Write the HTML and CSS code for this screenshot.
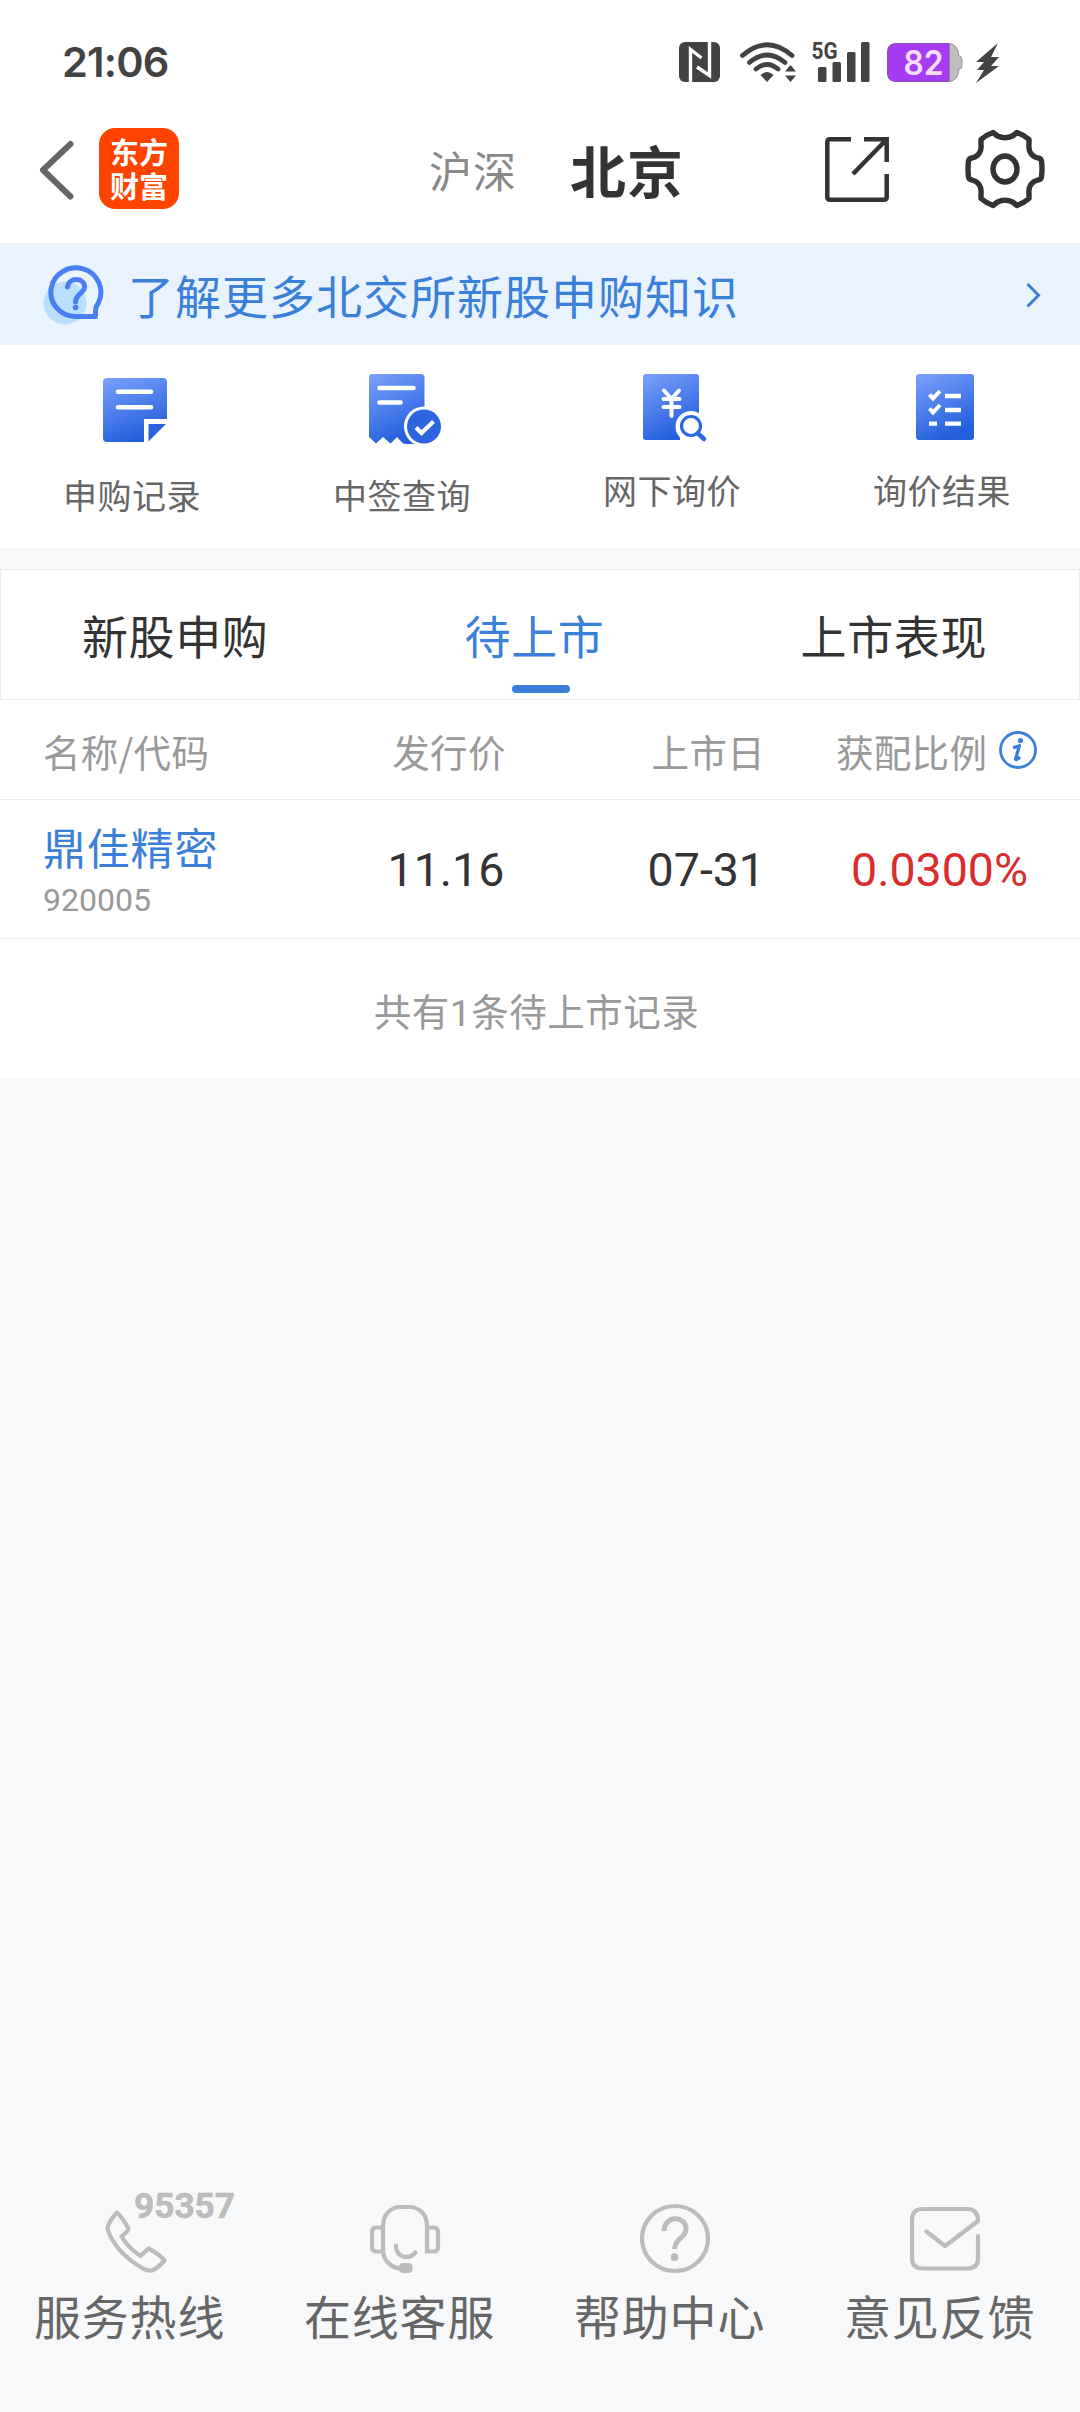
FILE: index.html
```html
<!DOCTYPE html>
<html lang="zh-CN">
<head>
<meta charset="utf-8">
<title>新股申购 - 北京</title>
<link rel="stylesheet" href="styles.css">
</head>
<body>
<div class="screen">
  <div class="status">
    <span class="clock">21:06</span>
    <svg class="status-icons" width="330" height="50" viewBox="675 38 330 50">
      <g fill="#424242">
        <rect x="679" y="42" width="41" height="40" rx="6"/>
        <path d="M690.5 82V49.5L701.5 58" fill="none" stroke="#fff" stroke-width="3.4"/>
        <path d="M709.5 42V75.500L697 67" fill="none" stroke="#fff" stroke-width="3.4"/>
        <g fill="none" stroke="#424242" stroke-width="4.800" stroke-linecap="round">
          <path d="M742.500 55.500Q767 34 792 55.500"/>
          <path d="M749.500 62.500Q767 47.500 785 62.500"/>
          <path d="M756 69Q767 60 778 69"/>
        </g>
        <path d="M760.500 75Q767 69 773.500 75L767 82Z"/>
        <path d="M785 71.500L790.500 65L796 71.500ZM785 75.500L790.500 82L796 75.500Z"/>
        <rect x="818" y="67" width="8.500" height="15" rx="1.500"/>
        <rect x="832.500" y="62" width="8.500" height="20" rx="1.500"/>
        <rect x="847" y="52" width="8.500" height="30" rx="1.500"/>
        <rect x="861" y="42" width="8.500" height="40" rx="1.500"/>
        <text class="net" x="811.500" y="58.500" textLength="26" lengthAdjust="spacingAndGlyphs">5G</text>
      </g>
      <path d="M949 43.500Q958 44 959 56Q962 56 962 60V65Q962 69 959 69.500Q958 81 949 81.500Z" fill="#bdbdbd" stroke="#999"/>
      <path d="M949 43.500V81.500H896Q887.500 81.500 887.500 73V52Q887.500 43.500 896 43.500Z" fill="#a63cf2" stroke="#8d4ab8"/>
      <text class="pct" x="903.500" y="74.500" textLength="40" lengthAdjust="spacingAndGlyphs">82</text>
      <path d="M998 43L976 62H984L977 70H984L976 83L999 66H991L999 57H991Z" fill="#424242"/>
    </svg>
  </div>

  <header class="nav">
    <svg class="back" width="36" height="60" viewBox="39 140 36 60"><path d="M70.500 144L43 170L70.500 196.500" fill="none" stroke="#666" stroke-width="6" stroke-linecap="round" stroke-linejoin="round"/></svg>
    <div class="logo"><span>东方</span><span>财富</span></div>
    <span class="market">沪深</span>
    <span class="market market-on">北京</span>
    <svg class="share" width="66" height="67" viewBox="824 136 66 67"><path d="M851 139.300H830Q827.300 139.300 827.300 142V197Q827.300 199.700 830 199.700H884Q886.700 199.700 886.700 197V174M886.700 162V139.300H864M853 174L886 140" fill="none" stroke="#333" stroke-width="4.500"/></svg>
    <svg class="gear" width="84" height="84" viewBox="-42 -42 84 84">
      <g fill="none" stroke="#333" stroke-width="5.400" stroke-linejoin="round">
        <path d="M7.500 -33L12 -36.500Q18 -34.500 24 -29.500V-25C23 -17 27 -12.500 33 -11Q36 -10.500 36.500 -8Q37.500 0 36.500 8Q36 10.500 33 11C27 12.500 23 17 24 25V29.500Q18 34.500 12 36.500L7.500 33Q0 29.500 -7.500 33L-12 36.500Q-18 34.500 -24 29.500V25C-23 17 -27 12.500 -33 11Q-36 10.500 -36.500 8Q-37.500 0 -36.500 -8Q-36 -10.500 -33 -11C-27 -12.500 -23 -17 -24 -25V-29.500Q-18 -34.500 -12 -36.500L-7.500 -33Q0 -29.500 7.500 -33Z"/>
        <ellipse rx="12" ry="13"/>
      </g>
    </svg>
  </header>

  <div class="banner">
    <svg class="ask" width="62" height="62" viewBox="42 264 62 62">
      <circle cx="65" cy="303" r="21.500" fill="#bbdffe"/>
      <path d="M97.500 316.500H75.500A25 24.300 0 1 1 98.500 302.500C96 306 95.500 308 95.500 311V316.500Z" fill="none" stroke="#4a7ef5" stroke-width="5"/>
      <path d="M67.500 287C68.500 277 84.500 277 84.500 287C84.500 293 75.500 294 75.500 302" fill="none" stroke="#4a7ef5" stroke-width="5" stroke-linecap="round"/>
      <circle cx="75.500" cy="307.500" r="2.800" fill="#4a7ef5"/>
    </svg>
    <span class="banner-text">了解更多北交所新股申购知识</span>
    <svg class="more" width="18" height="28" viewBox="1024 282 18 28"><path d="M1027.500 285L1038.500 296.300L1027.500 307.500" fill="none" stroke="#3a80d9" stroke-width="3"/></svg>
  </div>

  <nav class="tools">
    <a class="tool">
      <svg width="80" height="76" viewBox="96 370 80 76">
        <defs><linearGradient id="blue" x1="0" y1="0" x2=".4" y2="1"><stop offset="0" stop-color="#7ba2fd"/><stop offset="1" stop-color="#2560dc"/></linearGradient></defs>
        <path d="M107 378H163Q167 378 167 382V419H144V442H107Q103 442 103 438V382Q103 378 107 378Z" fill="url(#blue)"/>
        <path d="M148.500 424H166L148.500 441.500Z" fill="#2b63dc"/>
        <path d="M118 391.700H151M118 407.300H151" stroke="#fff" stroke-width="4.600" stroke-linecap="round"/>
      </svg>
      <span>申购记录</span>
    </a>
    <a class="tool">
      <svg width="80" height="76" viewBox="366 370 80 76">
        <path d="M372 374H421Q424.500 374 424.500 377.500V444H407L403 443.500L397 437L390.500 443.500L383 437L376 443.500L369 437V377Q369 374 372 374Z" fill="url(#blue)"/>
        <path d="M379.500 388H413.500M379.500 402.500H400.500" stroke="#fff" stroke-width="4.600" stroke-linecap="round"/>
        <circle cx="424" cy="426.500" r="20" fill="#fff"/>
        <circle cx="424" cy="426.500" r="17" fill="#2c65de"/>
        <path d="M416 427.500L421.500 433L433.500 421.500" fill="none" stroke="#fff" stroke-width="4.200"/>
      </svg>
      <span>中签查询</span>
    </a>
    <a class="tool tool-high">
      <svg width="80" height="76" viewBox="636 370 80 76">
        <rect x="643" y="374" width="56" height="66" rx="3" fill="url(#blue)"/>
        <path d="M664 390.500L671.500 399L679 390.500M671.500 399V416M663.500 399H679.500M663.500 407H679.500" fill="none" stroke="#fff" stroke-width="4" stroke-linecap="round"/>
        <circle cx="691" cy="426.500" r="15.500" fill="#fff"/>
        <path d="M680 437L697 432L704 440.500V445H680Z" fill="#fff"/>
        <circle cx="691" cy="426" r="9.500" fill="#fff" stroke="#2f68dc" stroke-width="3.200"/>
        <path d="M698 433.500L704 439" stroke="#2f68dc" stroke-width="4.500" stroke-linecap="round"/>
      </svg>
      <span>网下询价</span>
    </a>
    <a class="tool tool-high">
      <svg width="80" height="76" viewBox="906 370 80 76">
        <rect x="916" y="374" width="58" height="66" rx="3" fill="url(#blue)"/>
        <path d="M945 396H961M945 410H961M945 423.700H961M929 423.700H937" stroke="#fff" stroke-width="4.300"/>
        <path d="M929.500 394.500L933 398.500L940 391M929.500 408.500L933 412.500L940 405" fill="none" stroke="#fff" stroke-width="4"/>
      </svg>
      <span>询价结果</span>
    </a>
  </nav>

  <div class="tabs">
    <span class="tab">新股申购</span>
    <span class="tab tab-on">待上市</span>
    <span class="tab">上市表现</span>
  </div>

  <section class="table">
    <div class="row head">
      <span class="c1">名称/代码</span>
      <span class="c2">发行价</span>
      <span class="c3">上市日</span>
      <span class="c4">获配比例<svg class="info" width="40" height="40" viewBox="0 0 40 40"><circle cx="20" cy="20" r="17.500" fill="none" stroke="#3a80d9" stroke-width="2.800"/><circle cx="22.500" cy="10.500" r="2.600" fill="#3a80d9"/><path d="M15 17.500Q19 17 21.500 15.500L17.500 29Q17.500 31 22 27" fill="none" stroke="#3a80d9" stroke-width="3.200" stroke-linejoin="round"/></svg></span>
    </div>
    <div class="row stock">
      <div class="c1"><div class="name">鼎佳精密</div><div class="code">920005</div></div>
      <span class="c2">11.16</span>
      <span class="c3">07-31</span>
      <span class="c4 red">0.0300%</span>
    </div>
    <div class="total">共有<i>1</i>条待上市记录</div>
  </section>

  <footer class="service">
    <a class="help">
      <svg width="140" height="98" viewBox="100 2180 140 98">
        <path d="M117 2212.500Q122 2217 128.500 2228.500Q128.500 2231 121.500 2236.500Q128 2247.500 140.500 2256L148.500 2248.500Q158 2253 164.500 2260.500Q158 2268 152 2270.500Q148 2271 143 2268.500C126 2259 112 2244 107.500 2229Q107.500 2223 117 2212.500Z" fill="none" stroke="#bcbcbc" stroke-width="4.200" stroke-linejoin="round"/>
        <text class="hot" x="134" y="2217.500" textLength="101" lengthAdjust="spacingAndGlyphs">95357</text>
      </svg>
      <span>服务热线</span>
    </a>
    <a class="help">
      <svg width="140" height="98" viewBox="370 2180 140 98">
        <g fill="none" stroke="#bcbcbc" stroke-width="4.200" stroke-linecap="round">
          <path d="M383 2252V2226C383 2214 391 2207 401 2207H409C419 2207 427 2214 427 2226V2251.500H434Q438 2251.500 438 2247V2232Q438 2227.500 434 2227.500H428M383 2227.500H376.500Q372 2227.500 372 2232V2247Q372 2251.500 376.500 2251.500H383C384 2261 391 2268 401 2268.500"/>
          <path d="M396 2245.500C396 2258 409 2260 415.500 2252.500"/>
        </g>
        <rect x="399" y="2263" width="13.500" height="10" rx="4" fill="#bcbcbc"/>
      </svg>
      <span>在线客服</span>
    </a>
    <a class="help">
      <svg width="140" height="98" viewBox="640 2180 140 98">
        <g fill="none" stroke="#bcbcbc" stroke-width="4.200">
          <ellipse cx="675" cy="2238.500" rx="33" ry="32.500"/>
          <path d="M664 2231C664 2215 686 2215 686 2229C686 2238 675 2238 674.500 2249" stroke-width="5"/>
        </g>
        <circle cx="674.500" cy="2257.200" r="3.900" fill="#bcbcbc"/>
      </svg>
      <span>帮助中心</span>
    </a>
    <a class="help">
      <svg width="140" height="98" viewBox="910 2180 140 98">
        <path d="M978 2236V2258Q978 2268.500 967.500 2268.500H922.500Q912 2268.500 912 2258V2220Q912 2209 922.500 2209H967.500Q978 2209 978 2221L945 2246L926.500 2231.500" fill="none" stroke="#bcbcbc" stroke-width="4.200" stroke-linecap="round" stroke-linejoin="round"/>
      </svg>
      <span>意见反馈</span>
    </a>
  </footer>
</div>
</body>
</html>
```
FILE: styles.css
```css
* { box-sizing: border-box; }
body { margin: 0; font-family: "Noto Sans CJK SC", sans-serif; }
svg { display: block; flex: none; }
.screen { width: 1080px; height: 2412px; display: flex; flex-direction: column; background: #f7f8fa; overflow: hidden; white-space: nowrap; }

.status { height: 88px; padding: 38px 75px 0 62px; display: flex; justify-content: space-between; background: #fff; }
.clock { font: 600 41.500px/48px Inter, sans-serif; letter-spacing: -.8px; color: #424242; }
.net { font: 700 24px Roboto, sans-serif; }
.pct { font: 600 34px Inter, sans-serif; fill: #f6dcff; }

.nav { height: 156px; padding: 40px 33px 0 39px; display: flex; align-items: flex-start; background: #fff; border-bottom: 1px solid #eee; }
.back { margin: 12px 24px 0 0; }
.logo { width: 80px; height: 81px; padding: 6px 0 0 11px; margin-right: 250px; border-radius: 16px; background: #ff4400; color: #fff; font-size: 29px; font-weight: 700; line-height: 34px; }
.logo span { display: block; }
.market { width: 141px; font-size: 43px; line-height: 82px; letter-spacing: 1px; color: #888; }
.market-on { width: 254px; font-size: 56px; font-weight: 700; color: #333; letter-spacing: 1px; }
.share { margin: 8px 73px 0 0; }
.gear { margin-top: -1px; }

.banner { height: 101px; padding: 0 38px 0 42px; display: flex; align-items: center; background: #e8f3fe; }
.banner-text { flex: 1; margin-left: 24px; padding-bottom: 2px; font-size: 46px; letter-spacing: 1px; line-height: 60px; color: #3a80d9; }

.tools { height: 203px; display: flex; background: #fff; }
.tool { width: 270px; padding-top: 25px; display: flex; flex-direction: column; }
.tool svg { margin-left: 96px; }
.tool span { margin: 24px 0 0 63px; font-size: 34px; letter-spacing: .5px; line-height: 50px; color: #666; }
.tool-high span { margin-top: 19px; }

.tabs { height: 131px; margin-top: 21px; display: flex; background: #fff; border: 1px solid #ececec; }
.tab { flex: 1; padding-right: 11px; text-align: center; font-size: 46px; letter-spacing: .6px; line-height: 129px; color: #333; }
.tab-on { position: relative; color: #3a80d9; }
.tab-on::after { content: ""; position: absolute; left: 152px; bottom: 6px; width: 58px; height: 8px; border-radius: 4px; background: #3a80d9; }

.table { height: 379px; background: #fff; }
.row { display: grid; grid-template-columns: 345px 208px 212px 1fr; align-items: center; border-bottom: 1px solid #ececec; }
.c1 { padding-left: 43px; }
.c2 { text-align: center; }
.c3 { text-align: right; }
.head { height: 100px; padding-top: 2px; font-size: 37.500px; letter-spacing: .3px; color: #999; }
.head .c4 { display: flex; align-items: center; padding-left: 71px; }
.info { margin: -2px 0 0 11px; }
.stock { height: 139px; font: 46.500px Roboto, sans-serif; color: #333; }
.stock .c2 { padding-right: 6px; padding-top: 2px; }
.stock .c3 { padding-top: 2px; }
.stock .c4 { padding: 2px 0 0 86px; }
.stock .red { color: #d92c2c; }
.name { margin-top: -4px; font: 43px/60px "Noto Sans CJK SC", sans-serif; letter-spacing: .8px; color: #3a80d9; }
.code { margin-top: 5px; font-size: 32px; line-height: 38px; color: #999; }
.total { padding-right: 7px; text-align: center; font-size: 37.500px; letter-spacing: .5px; line-height: 141px; color: #999; }
.total i { font-family: Roboto, sans-serif; font-style: normal; }

.service { margin-top: auto; height: 232px; display: flex; }
.help { width: 270px; display: flex; flex-direction: column; }
.help svg { margin-left: 100px; }
.help span { margin: 5px 0 0 34px; font-size: 47px; letter-spacing: .8px; line-height: 64px; color: #666; }
.hot { font: 700 35px "Roboto", sans-serif; fill: #bcbcbc; stroke: #bcbcbc; stroke-width: .6px; }
```
